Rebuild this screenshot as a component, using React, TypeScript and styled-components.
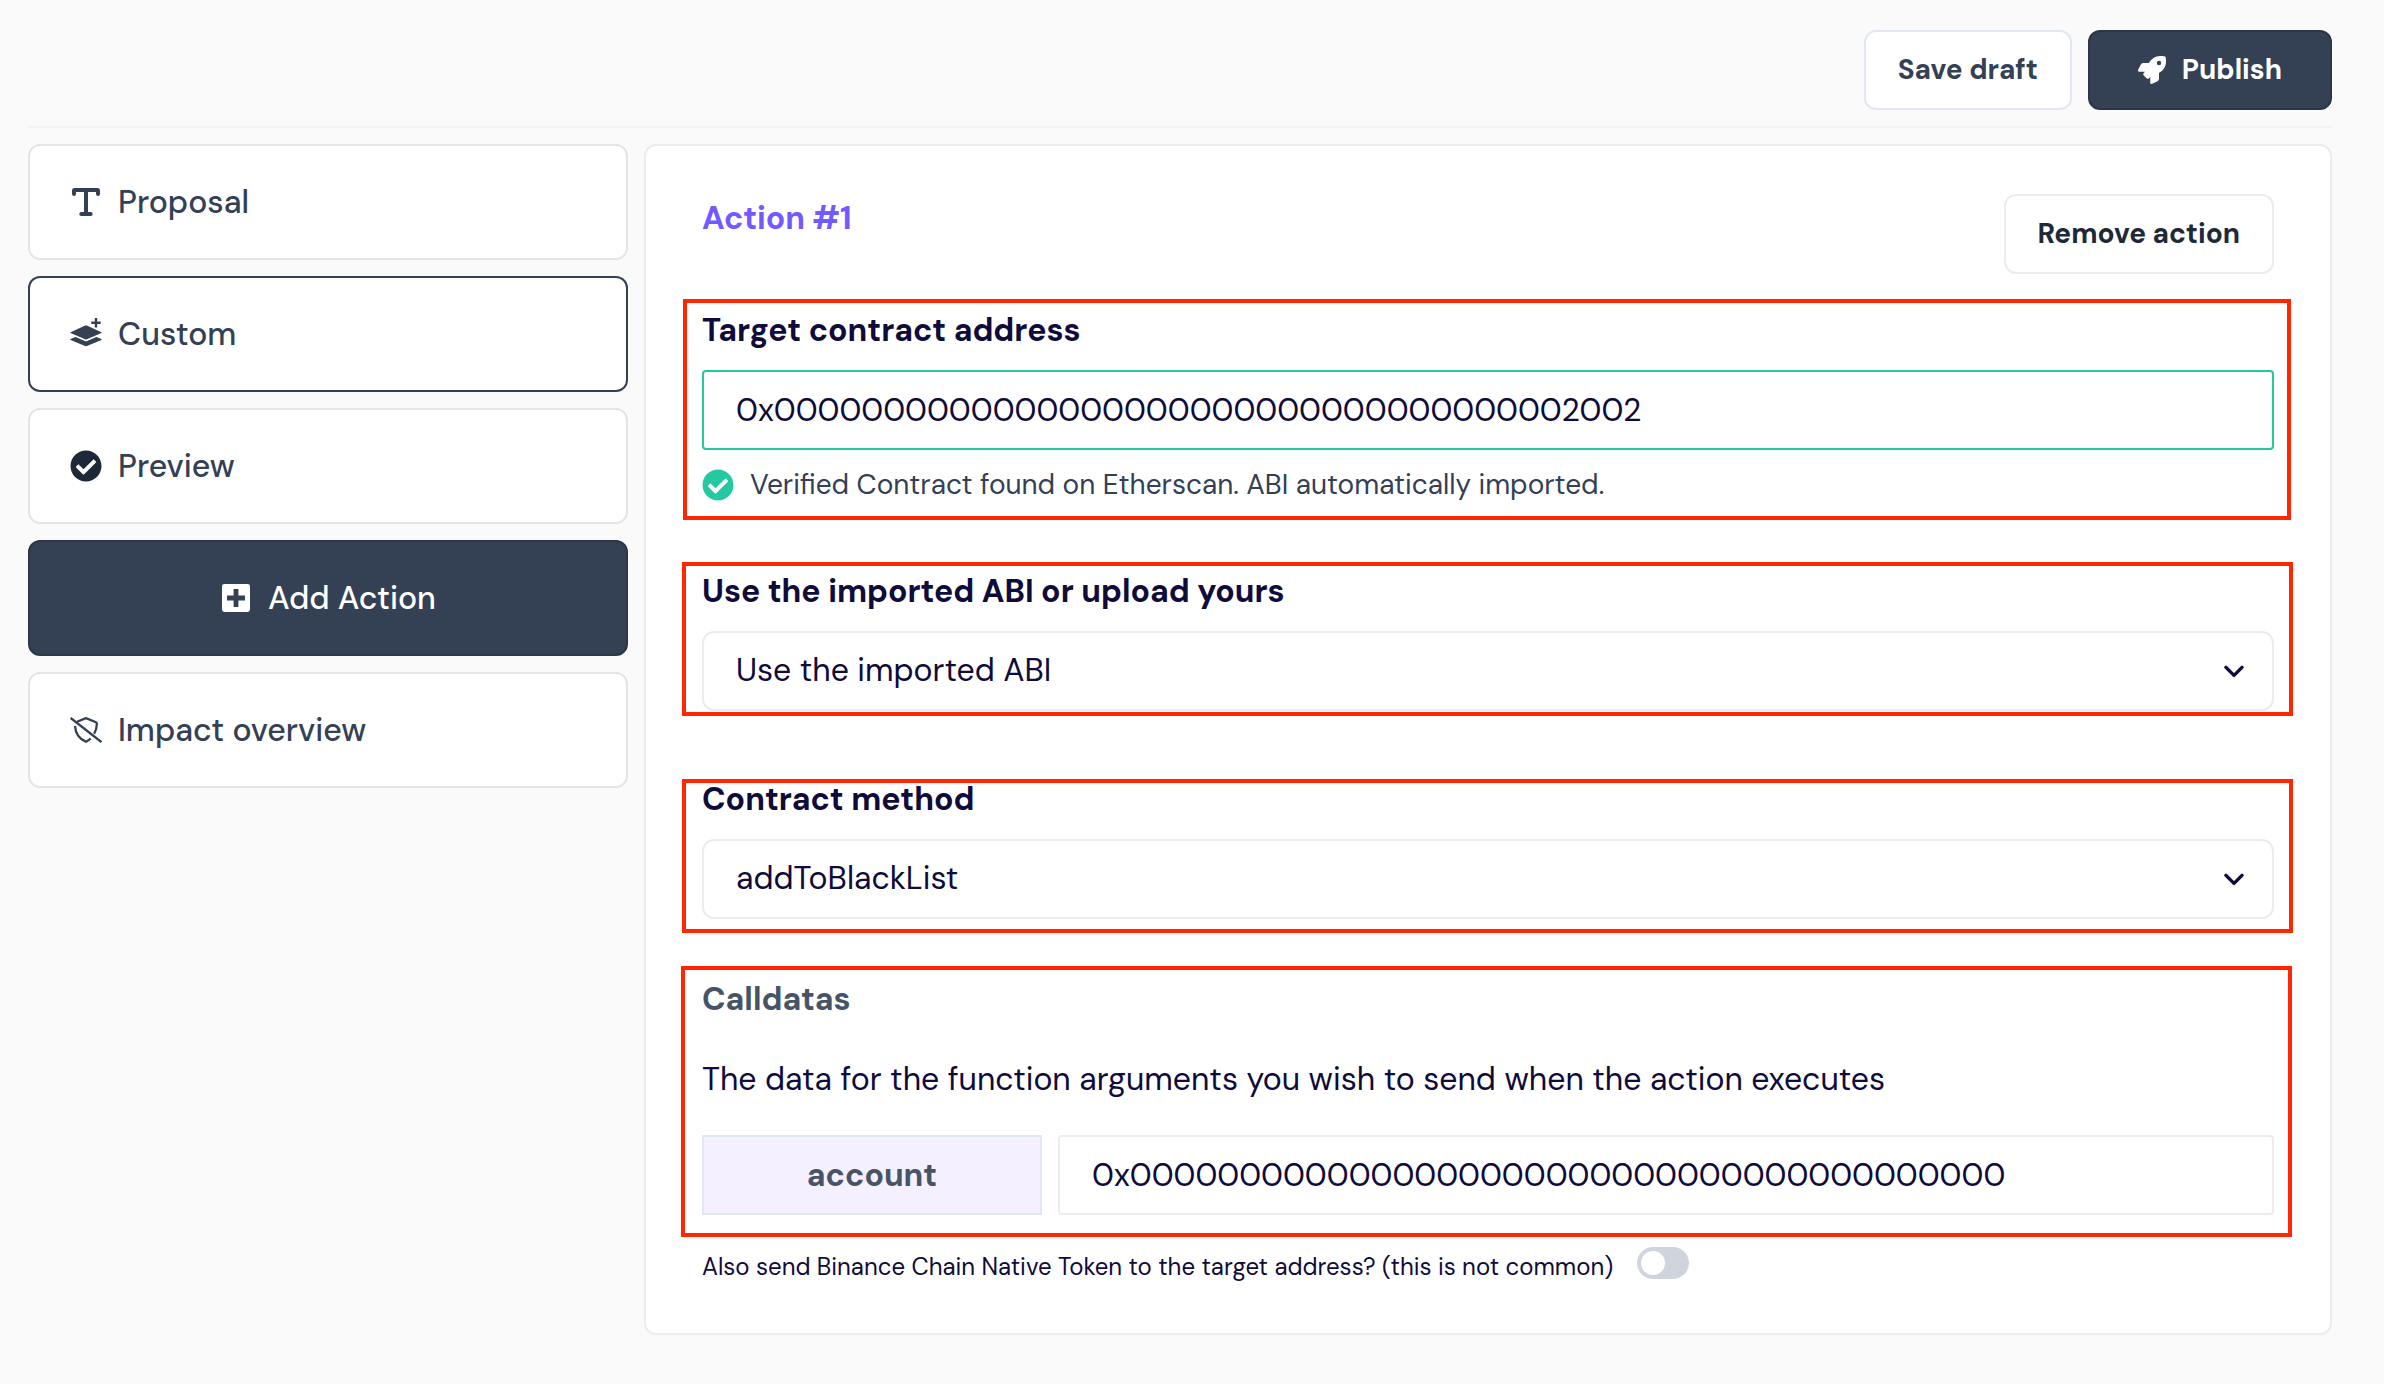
import React from "react";
import styled, { createGlobalStyle, css } from "styled-components";
import { FaCheckCircle, FaRocket } from "react-icons/fa";

const color = {
  page: "#fafafa",
  white: "#ffffff",
  slate: "#344054",
  slateEdge: "#2d3648",
  ink: "#1d2939",
  navy: "#0f0b3b",
  muted: "#475467",
  violet: "#725aff",
  green: "#24c9a1",
  line: "#ebebf0",
  cardLine: "#e4e5eb",
  coolLine: "#e2e8f0",
  mark: "#ff2600",
};

const GlobalStyle = createGlobalStyle`
  *, *::before, *::after { box-sizing: border-box; }
  body {
    margin: 0;
    background: ${color.page};
    color: ${color.navy};
    font-family: "DM Sans", Inter, "Liberation Sans", sans-serif;
    font-size: 32px;
    line-height: 48px;
  }
  button, input { font: inherit; }
  svg { display: block; flex: none; }
`;

const Page = styled.div`
  width: 2384px;
  min-height: 1384px;
  padding: 30px 52px 0 28px;
`;

const Toolbar = styled.header`
  display: flex;
  justify-content: flex-end;
  gap: 16px;
  padding-bottom: 16px;
  border-bottom: 2px solid #f1f1f6;
`;

const Button = styled.button<{ $tone?: "primary" | "outline" | "plain" }>`
  display: flex;
  align-items: center;
  justify-content: center;
  gap: 16px;
  height: 80px;
  padding: 0 32px;
  border: 2px solid ${color.coolLine};
  border-radius: 12px;
  background: ${color.white};
  color: ${color.slate};
  font-size: 28px;
  font-weight: 700;
  white-space: nowrap;
  ${(p) =>
    p.$tone === "primary" &&
    css`
      padding: 0 48px;
      border-color: ${color.slateEdge};
      background: ${color.slate};
      color: ${color.white};
    `}
  ${(p) =>
    p.$tone === "plain" &&
    css`
      border-color: ${color.line};
      color: ${color.ink};
    `}
`;

const Columns = styled.div`
  display: grid;
  grid-template-columns: 600px 1fr;
  gap: 16px;
  align-items: start;
  padding-top: 16px;
`;

const Steps = styled.nav`
  display: flex;
  flex-direction: column;
  gap: 16px;
`;

const Step = styled.button<{ $active?: boolean }>`
  display: flex;
  align-items: center;
  gap: 16px;
  height: 116px;
  padding: 0 40px;
  border: 2px solid ${(p) => (p.$active ? color.slate : color.cardLine)};
  border-radius: 12px;
  background: ${color.white};
  color: ${color.slate};
  font-weight: 500;
`;

const AddStep = styled(Step)`
  justify-content: center;
  border-color: ${color.slateEdge};
  background: ${color.slate};
  color: ${color.white};
`;

const IconSlot = styled.span<{ $dark?: boolean }>`
  display: grid;
  place-items: center;
  width: 32px;
  height: 32px;
  color: ${(p) => (p.$dark ? color.ink : "inherit")};
`;

const Panel = styled.main`
  height: 1191px;
  padding: 48px 56px 0;
  border: 2px solid ${color.line};
  border-radius: 12px;
  background: ${color.white};
`;

const PanelHead = styled.div`
  display: flex;
  justify-content: space-between;
  align-items: flex-start;
`;

const Heading = styled.h2`
  margin: 0;
  color: ${color.violet};
  font-size: 32px;
  font-weight: 700;
`;

const Section = styled.section<{ $top: number }>`
  position: relative;
  display: flex;
  flex-direction: column;
  margin-top: ${(p) => p.$top}px;
`;

const Outline = styled.div<{ $inset: string }>`
  position: absolute;
  inset: ${(p) => p.$inset};
  border: 4px solid ${color.mark};
  pointer-events: none;
`;

const Label = styled.h3<{ $muted?: boolean }>`
  margin: 0;
  color: ${(p) => (p.$muted ? color.muted : color.navy)};
  font-size: 32px;
  font-weight: 700;
`;

const Field = styled.input<{ $valid?: boolean }>`
  width: 100%;
  height: 80px;
  padding: 0 32px;
  border: 2px solid ${(p) => (p.$valid ? color.green : color.line)};
  border-radius: 4px;
  outline: none;
  background: ${color.white};
  color: ${color.navy};
`;

const Select = styled.div`
  display: flex;
  align-items: center;
  justify-content: space-between;
  height: 80px;
  margin-top: 16px;
  padding: 0 28px 2px 32px;
  border: 2px solid ${color.line};
  border-radius: 12px;

  svg {
    margin-top: 4px;
  }
`;

const FieldWrap = styled.div`
  margin-top: 16px;
`;

const Note = styled.p`
  display: flex;
  align-items: center;
  gap: 16px;
  height: 32px;
  margin: 19px 0 0;
  color: ${color.slate};
  font-size: 28px;
  line-height: 32px;

  svg {
    color: ${color.green};
  }
`;

const Description = styled.p`
  margin: 32px 0;
`;

const Argument = styled.div`
  display: grid;
  grid-template-columns: 340px 1fr;
  gap: 16px;
`;

const ArgumentName = styled.div`
  display: grid;
  place-items: center;
  height: 80px;
  border: 2px solid ${color.coolLine};
  background: #f4f0ff;
  color: ${color.muted};
  font-weight: 700;
`;

const ToggleRow = styled.label`
  display: flex;
  align-items: flex-start;
  gap: 24px;
  margin-top: 32px;
  font-size: 24px;
  line-height: 32px;
`;

const ToggleText = styled.span`
  padding-top: 4px;
`;

const Track = styled.span`
  display: flex;
  align-items: center;
  width: 52px;
  height: 32px;
  padding: 4px;
  border-radius: 16px;
  background: #d0d5dd;
`;

const Knob = styled.span`
  width: 24px;
  height: 24px;
  border-radius: 50%;
  background: ${color.white};
`;

const TextIcon = () => (
  <svg width="28" height="28" viewBox="0 0 28 28" fill="none" stroke="currentColor" strokeWidth="4" strokeLinecap="round" strokeLinejoin="round">
    <path d="M2 6V2.6Q2 2 2.6 2H25.4Q26 2 26 2.6V6M14 2V26M9.3 26H18.7" />
  </svg>
);

const LayersPlusIcon = () => (
  <svg width="32" height="32" viewBox="0 0 32 32" fill="currentColor">
    <path d="M.6 14.3 15.2 7.6Q16 7.3 16.8 7.6L31.4 14.3Q32 14.7 31.4 15.1L16.9 21.3Q16 21.7 15.1 21.3L.6 15.1Q0 14.7.6 14.3Z" />
    <path d="M.6 21.1 5.6 18.9 14.8 22.9Q16 23.4 17.2 22.9L26.4 18.9 31.4 21.1Q32 21.5 31.4 21.9L16.9 28.1Q16 28.4 15.1 28.1L.6 21.9Q0 21.5.6 21.1Z" />
    <path d="M26 0V9.4M21.3 4.7H30.7" fill="none" stroke="currentColor" strokeWidth="2.4" />
  </svg>
);

const PlusSquareIcon = () => (
  <svg width="28" height="28" viewBox="0 0 28 28">
    <rect width="28" height="28" rx="2.4" fill="currentColor" />
    <path d="M14 5V23M5 14H23" stroke={color.slate} strokeWidth="4.8" />
  </svg>
);

const ShieldOffIcon = () => (
  <svg width="32" height="26" viewBox="0 0 32 26" fill="none" stroke="currentColor" strokeWidth="2.3" strokeLinejoin="round">
    <path d="M7 4.8 15.4 1.4Q16 1.1 16.6 1.4L26 5.2Q26.8 5.6 26.8 6.3 27 11.8 24.2 16.8" />
    <path d="M5 8.8Q5.8 20.2 15.4 24.4 16 24.7 16.6 24.4 18.8 23.4 20.6 21.5" />
    <path d="M.6 1 31.4 25" />
  </svg>
);

const ChevronIcon = () => (
  <svg width="20" height="14" viewBox="0 0 20 14" fill="none" stroke="currentColor" strokeWidth="3.4" strokeLinecap="round" strokeLinejoin="round">
    <path d="M2 2.4 10 10.4 18 2.4" />
  </svg>
);

export default function App() {
  return (
    <>
      <GlobalStyle />
      <Page>
        <Toolbar>
          <Button>Save draft</Button>
          <Button $tone="primary">
            <FaRocket size={28} />
            Publish
          </Button>
        </Toolbar>
        <Columns>
          <Steps>
            <Step>
              <IconSlot><TextIcon /></IconSlot>
              Proposal
            </Step>
            <Step $active>
              <IconSlot><LayersPlusIcon /></IconSlot>
              Custom
            </Step>
            <Step>
              <IconSlot $dark><FaCheckCircle size={32} /></IconSlot>
              Preview
            </Step>
            <AddStep>
              <IconSlot><PlusSquareIcon /></IconSlot>
              Add Action
            </AddStep>
            <Step>
              <IconSlot><ShieldOffIcon /></IconSlot>
              Impact overview
            </Step>
          </Steps>
          <Panel>
            <PanelHead>
              <Heading>Action #1</Heading>
              <Button $tone="plain">Remove action</Button>
            </PanelHead>

            <Section $top={32}>
              <Label>Target contract address</Label>
              <FieldWrap>
                <Field $valid readOnly value="0x0000000000000000000000000000000000002002" />
              </FieldWrap>
              <Note>
                <FaCheckCircle size={32} />
                Verified Contract found on Etherscan. ABI automatically imported.
              </Note>
              <Outline $inset="-7px -17px -19px -19px" />
            </Section>

            <Section $top={66}>
              <Label>Use the imported ABI or upload yours</Label>
              <Select>
                Use the imported ABI
                <ChevronIcon />
              </Select>
              <Outline $inset="-5px -19px -5px -20px" />
            </Section>

            <Section $top={64}>
              <Label>Contract method</Label>
              <Select>
                addToBlackList
                <ChevronIcon />
              </Select>
              <Outline $inset="4px -19px -14px -20px" />
            </Section>

            <Section $top={56}>
              <Label $muted>Calldatas</Label>
              <Description>
                The data for the function arguments you wish to send when the action executes
              </Description>
              <Argument>
                <ArgumentName>account</ArgumentName>
                <Field readOnly value="0x0000000000000000000000000000000000000000" />
              </Argument>
              <Outline $inset="-9px -18px -22px -21px" />
            </Section>

            <ToggleRow>
              <ToggleText>
                Also send Binance Chain Native Token to the target address? (this is not common)
              </ToggleText>
              <Track>
                <Knob />
              </Track>
            </ToggleRow>
          </Panel>
        </Columns>
      </Page>
    </>
  );
}
